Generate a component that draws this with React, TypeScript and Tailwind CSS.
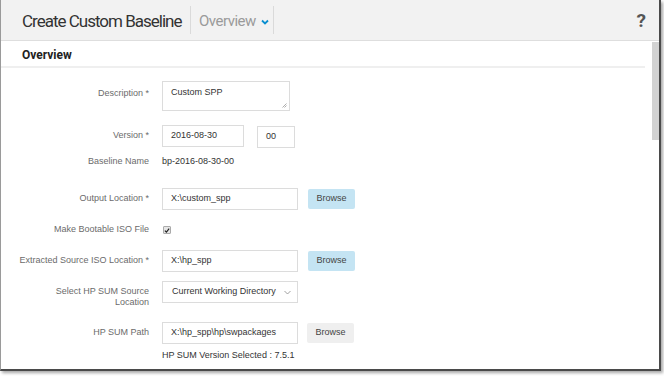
import React from "react";

const lbl = "w-[148px] shrink-0 text-right text-[#6b6b6b]";

function Browse({ blue = true }: { blue?: boolean }) {
  return (
    <div
      className={`ml-[10px] flex h-[20px] w-[47px] items-center justify-center rounded-[2px] text-[9px] text-[#444] ${
        blue ? "bg-[#c4e4f3]" : "bg-[#efefef]"
      }`}
    >
      Browse
    </div>
  );
}

function Input({ w, text, h = 22 }: { w: number; text: string; h?: number }) {
  return (
    <div
      className="flex items-center border border-[#dcdcdc] bg-white pl-[8px] text-[#333]"
      style={{ width: w, height: h }}
    >
      {text}
    </div>
  );
}

export default function App() {
  return (
    <div className="h-[376px] w-[664px] overflow-hidden bg-white" style={{ fontFamily: "'Liberation Sans', Arial, sans-serif" }}>
      <div className="relative h-[371px] w-[661px] border-b-[2px] border-l border-r-[2px] border-b-[#4a4a4a] border-l-[#9a9a9a] border-r-[#4a4a4a] shadow-[2px_2px_3px_rgba(0,0,0,0.35)]">
        {/* header */}
        <div className="flex h-[41px] items-center border-b border-[#dedede] bg-[#f2f2f2]">
          <div
            className="mt-[3px] w-[189px] pl-[21px] text-[17px] tracking-[-1px] text-[#333]"
            style={{ fontFamily: "Roboto, 'Liberation Sans', sans-serif" }}
          >
            Create Custom Baseline
          </div>
          <div className="h-[28px] w-px bg-[#dadada]" />
          <div
            className="mt-[3px] flex w-[82px] items-center pl-[8px] text-[15px] tracking-[-0.5px] text-[#9a9a9a]"
            style={{ fontFamily: "Roboto, 'Liberation Sans', sans-serif" }}
          >
            Overview
            <svg width="8" height="6" viewBox="0 0 8 6" className="ml-[5px] mt-[1px]">
              <path d="M1 1.5 L4 4.5 L7 1.5" fill="none" stroke="#0a8fd0" strokeWidth="1.8" />
            </svg>
          </div>
          <div className="h-[28px] w-px bg-[#dadada]" />
          <div className="flex-1" />
          <div className="mt-[2px] pr-[13px] text-[19px] font-bold text-[#555]" style={{ fontFamily: "Roboto, sans-serif" }}>
            ?
          </div>
        </div>

        {/* scrollbar */}
        <div className="absolute right-0 top-[42px] h-[98px] w-[7px] bg-[#d2d2d2]" />

        {/* section title */}
        <div className="mr-[14px] border-b-[2px] border-[#efefef]">
          <div
            className="pl-[21px] pt-[6px] pb-[3px] text-[12px] font-bold leading-[16px] text-[#222]"
            style={{ fontFamily: "Roboto, 'Liberation Sans', sans-serif" }}
          >
            Overview
          </div>
        </div>

        {/* form */}
        <div className="flex flex-col text-[9px]">
          <div className="mt-[13px] flex">
            <div className={`${lbl} pt-[6px]`}>Description *</div>
            <div className="ml-[13px] relative h-[30px] w-[128px] border border-[#dcdcdc] pl-[8px] pt-[4px] text-[#333]">
              Custom SPP
              <svg width="5" height="5" viewBox="0 0 5 5" className="absolute bottom-[2px] right-[2px]">
                <path d="M4.5 0.5 L0.5 4.5 M4.5 2.5 L2.5 4.5" stroke="#999" strokeWidth="0.8" />
              </svg>
            </div>
          </div>

          <div className="mt-[14px] flex h-[22px] items-center">
            <div className={lbl}>Version *</div>
            <div className="ml-[13px] flex items-center">
              <Input w={82} text="2016-08-30" />
              <div className="ml-[13px] mt-[2px]">
                <Input w={38} text="00" />
              </div>
            </div>
          </div>

          <div className="mt-[7px] flex h-[16px] items-center">
            <div className={lbl}>Baseline Name</div>
            <div className="ml-[13px] text-[#333]">bp-2016-08-30-00</div>
          </div>

          <div className="mt-[18px] flex h-[22px] items-center">
            <div className={lbl}>Output Location *</div>
            <div className="ml-[13px] flex items-center">
              <Input w={136} text="X:\custom_spp" />
              <Browse />
            </div>
          </div>

          <div className="mt-[12px] flex h-[16px] items-center">
            <div className={lbl}>Make Bootable ISO File</div>
            <div className="ml-[14px] flex h-[8px] w-[8px] items-center justify-center rounded-[1px] border border-[#aaa] bg-[#e6e6e6]">
              <svg width="7" height="7" viewBox="0 0 7 7">
                <path d="M1 3.6 L2.8 5.3 L6 1.3" fill="none" stroke="#222" strokeWidth="1.4" />
              </svg>
            </div>
          </div>

          <div className="mt-[12px] flex h-[22px] items-center">
            <div className={lbl}>Extracted Source ISO Location *</div>
            <div className="ml-[13px] flex items-center">
              <Input w={136} text="X:\hp_spp" />
              <Browse />
            </div>
          </div>

          <div className="mt-[9px] flex h-[22px] items-start">
            <div className={`${lbl} pt-[5px] leading-[11px]`}>
              Select HP SUM Source
              <br />
              Location
            </div>
            <div className="ml-[13px] flex h-[22px] w-[136px] items-center justify-between border border-[#dcdcdc] pl-[9px] pr-[6px] text-[#333]">
              <span>Current Working Directory</span>
              <svg width="7" height="5" viewBox="0 0 7 5">
                <path d="M0.5 1 L3.5 4 L6.5 1" fill="none" stroke="#888" strokeWidth="0.8" />
              </svg>
            </div>
          </div>

          <div className="mt-[19px] flex h-[22px] items-center">
            <div className={lbl}>HP SUM Path</div>
            <div className="ml-[13px] flex items-center">
              <Input w={136} text="X:\hp_spp\hp\swpackages" />
              <div className="-ml-px">
                <Browse blue={false} />
              </div>
            </div>
          </div>

          <div className="mt-[5px] flex h-[14px] items-center">
            <div className="w-[148px] shrink-0" />
            <div className="ml-[13px] text-[#333]">HP SUM Version Selected : 7.5.1</div>
          </div>
        </div>
      </div>
    </div>
  );
}
